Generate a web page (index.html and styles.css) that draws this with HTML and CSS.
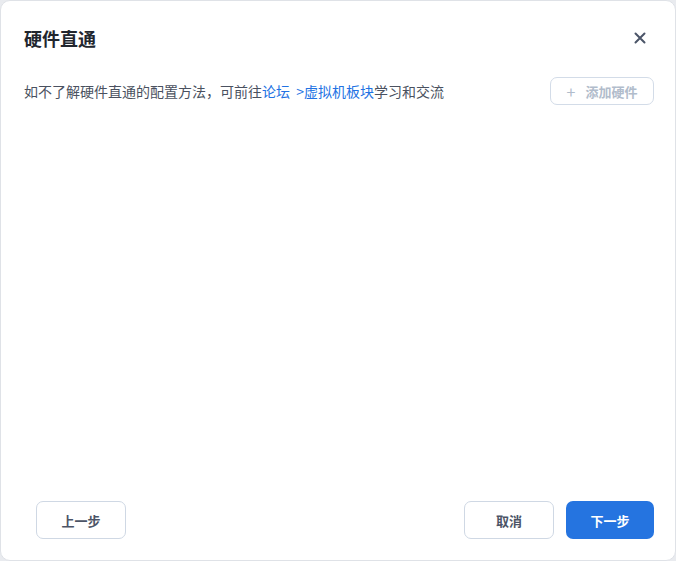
FILE: index.html
```html
<!DOCTYPE html>
<html lang="zh-CN">
<head>
    <meta charset="UTF-8">
    <title>硬件直通</title>
    <link rel="stylesheet" href="styles.css">
</head>
<body>
    <div class="dialog">
        <div class="dialog-header">
            <h2 class="dialog-title">硬件直通</h2>
            <button class="close-btn" aria-label="关闭">
                <svg width="12" height="12" viewBox="0 0 12 12"><path d="M1.5 1.5L10.5 10.5M10.5 1.5L1.5 10.5" stroke="#4b5568" stroke-width="2" stroke-linecap="round"/></svg>
            </button>
        </div>
        <div class="tip-row">
            <p class="tip">如不了解硬件直通的配置方法，可前往<a href="#">论坛&nbsp; &gt;虚拟机板块</a>学习和交流</p>
            <button class="btn btn-add" disabled><span class="plus">+</span>添加硬件</button>
        </div>
        <div class="dialog-body"></div>
        <div class="dialog-footer">
            <button class="btn btn-default">上一步</button>
            <div class="footer-right">
                <button class="btn btn-default">取消</button>
                <button class="btn btn-primary">下一步</button>
            </div>
        </div>
    </div>
</body>
</html>
```

FILE: styles.css
```css
*{margin:0;padding:0;box-sizing:border-box}
body{background:#e9ebef;font-family:"Noto Sans CJK SC","Noto Sans",sans-serif;width:676px;height:561px;overflow:hidden}
.dialog{width:676px;height:561px;background:#fff;border:1px solid #dfe2e7;border-radius:10px;display:flex;flex-direction:column}
.dialog-header{display:flex;align-items:center;justify-content:space-between;padding:23px 23px 0 23px;height:51px}
.dialog-title{font-size:18px;font-weight:700;color:#22262e;line-height:28px}
.close-btn{width:24px;height:24px;border:none;background:none;display:flex;align-items:center;justify-content:center;cursor:pointer}
.tip-row{display:flex;align-items:center;justify-content:space-between;margin-top:25px;padding:0 21px 0 23px;height:28px}
.tip{font-size:14px;color:#4a5160;line-height:20px}
.tip a{color:#2272e3;text-decoration:none}
.dialog-body{flex:1}
.dialog-footer{display:flex;justify-content:space-between;align-items:center;padding:0 21px 21px 35px}
.footer-right{display:flex;gap:12px}
.btn{font-family:inherit;font-size:13px;font-weight:700;border-radius:7px;cursor:pointer;display:flex;align-items:center;justify-content:center}
.btn-add{width:104px;height:28px;border:1px solid #d3dce8;background:#fff;color:#b1bccb;gap:10px}
.btn-add .plus{font-size:16px;font-weight:400;line-height:1}
.btn-default{width:90px;height:38px;border:1px solid #cfd8e4;background:#fff;color:#4c5466}
.btn-primary{width:88px;height:38px;border:none;background:#2574e0;color:#fff}
```
